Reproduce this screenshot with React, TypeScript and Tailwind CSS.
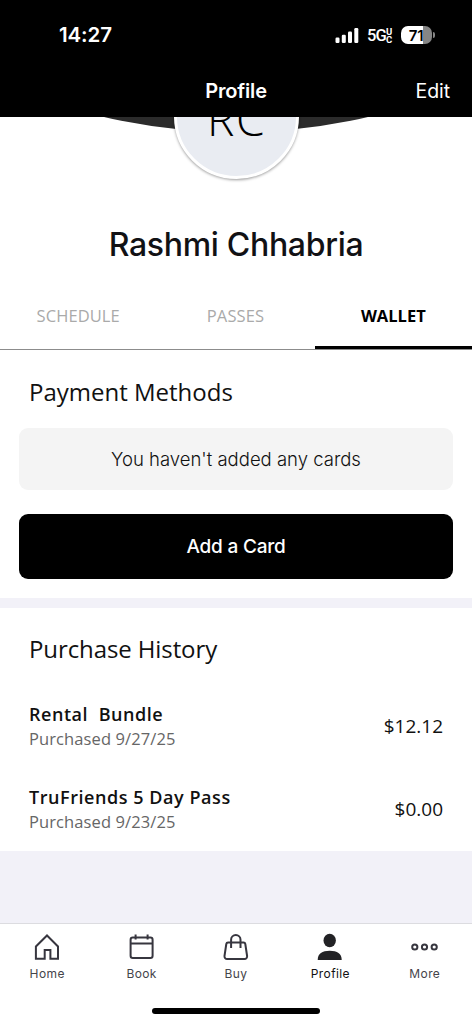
import type { ReactNode } from 'react'

const tabs = [
  { name: 'SCHEDULE', active: false },
  { name: 'PASSES', active: false },
  { name: 'WALLET', active: true },
]

const purchases = [
  { title: 'Rental  Bundle', date: 'Purchased 9/27/25', price: '$12.12' },
  { title: 'TruFriends 5 Day Pass', date: 'Purchased 9/23/25', price: '$0.00' },
]

function StatusBar() {
  return (
    <div className="flex h-[65px] items-start justify-between pr-[37px] pl-[59px] text-white">
      <span className="mt-[23px] text-[20.5px] leading-6 font-semibold tracking-[-0.1px]">14:27</span>
      <div className="mt-[25px] flex h-5 items-center">
        <svg width="25" height="17" viewBox="0 0 25 17" fill="currentColor">
          <rect x="0.5" y="10.5" width="4" height="5.5" rx="1.2" />
          <rect x="6.8" y="7.8" width="4" height="8.2" rx="1.2" />
          <rect x="13" y="4.5" width="4" height="11.5" rx="1.2" />
          <rect x="19.3" y="1" width="4" height="15" rx="1.2" />
        </svg>
        <span className="ml-[7px] w-[19px] pt-px font-['Roboto'] text-[16.5px] leading-5 font-medium tracking-[-0.8px]">5G</span>
        <span className="flex w-[7px] flex-col pt-px font-['Roboto'] text-[9.5px] leading-[8px] font-bold">
          <span>U</span>
          <span>C</span>
        </span>
        <div className="ml-[8px] flex h-[18px] w-[31px] items-center justify-center overflow-hidden rounded-[7px] bg-linear-to-r from-white from-70% to-[#858585] to-70%">
          <span className="mr-px text-[15px] leading-none font-semibold tracking-[-0.3px] text-black">71</span>
        </div>
        <div className="ml-px h-[6px] w-[2px] rounded-r-full bg-[#858585]" />
      </div>
    </div>
  )
}

function TitleBar() {
  return (
    <div className="grid h-[52px] grid-cols-3 items-center text-[20px] text-white">
      <span />
      <span className="text-center font-semibold tracking-[-0.15px]">Profile</span>
      <span className="pt-px pr-[22px] text-right text-[19.5px] tracking-[-0.1px]">Edit</span>
    </div>
  )
}

function Hero() {
  return (
    <div className="relative h-[168px] overflow-hidden">
      <svg className="absolute inset-x-0 top-0" width="472" height="16" viewBox="0 0 472 16">
        <circle cx="236" cy="-573" r="588" fill="#2b2b2b" />
      </svg>
      <div className="absolute top-[-63px] left-[174px] flex size-[125px] items-center justify-center rounded-full border-[3px] border-white bg-[#e9ecf2] shadow-[0_1px_3px_rgba(0,0,0,0.4)]">
        <span className="mt-[3px] font-['Open_Sans'] text-[46px] leading-[46px] font-light tracking-[1.5px] text-black">RC</span>
      </div>
      <h1 className="mt-[108px] text-center text-[32px] leading-10 font-[450] tracking-[-0.3px] text-[#111114]">
        Rashmi Chhabria
      </h1>
    </div>
  )
}

function Tabs() {
  return (
    <div className="grid h-[65px] grid-cols-3 border-b border-[#8c8c8c] font-['Open_Sans'] text-[16.5px]">
      {tabs.map((tab) => (
        <div
          key={tab.name}
          className={
            tab.active
              ? 'flex items-center justify-center border-b-[3px] border-black pt-px font-bold text-black'
              : 'flex items-center justify-center border-b-[3px] border-transparent pt-px pr-px text-[16.5px] tracking-[0.1px] text-[#aaa]'
          }
        >
          {tab.name}
        </div>
      ))}
    </div>
  )
}

function Icon({ children }: { children: ReactNode }) {
  return (
    <svg
      width="30"
      height="30"
      viewBox="0 0 30 30"
      fill="none"
      stroke="#37363f"
      strokeWidth="2"
      strokeLinejoin="round"
    >
      {children}
    </svg>
  )
}

function BottomNav() {
  const items = [
    {
      label: 'Home',
      icon: (
        <Icon>
          <path strokeLinejoin="miter" d="M3.9 14.5 15 3.5l11 11v12.2h-7.6v-8.8h-5.7v8.8H3.9Z" />
        </Icon>
      ),
    },
    {
      label: 'Book',
      icon: (
        <Icon>
          <rect x="3.6" y="5.5" width="22" height="20.5" rx="2.2" />
          <path d="M3.6 11.6h22M8.600 2.500v5M20.600 2.500v5" />
        </Icon>
      ),
    },
    {
      label: 'Buy',
      icon: (
        <Icon>
          <path d="M7.1 10.500h15.400a1.800 1.800 0 0 1 1.800 1.500l1.800 12a2.600 2.600 0 0 1-2.600 3H6.100a2.600 2.600 0 0 1-2.600-3l1.800-12A1.800 1.800 0 0 1 7.100 10.500Z" />
          <path d="M10.100 16V7.800a4.700 4.700 0 0 1 9.400 0V16" />
        </Icon>
      ),
    },
    {
      label: 'Profile',
      active: true,
      icon: (
        <svg width="30" height="30" viewBox="0 0 30 30" fill="#222225">
          <ellipse cx="14.700" cy="8.5" rx="6.2" ry="6.7" />
          <path d="M2.700 28c0-6.500 4.500-9.300 12-9.300S26.700 21.500 26.700 28Z" />
        </svg>
      ),
    },
    {
      label: 'More',
      icon: (
        <Icon>
          <circle cx="4.800" cy="15" r="2.600" />
          <circle cx="14.500" cy="15" r="2.600" />
          <circle cx="24.200" cy="15" r="2.600" />
        </Icon>
      ),
    },
  ]

  return (
    <nav className="flex h-[101px] flex-col items-center border-t border-[#dcdce0] bg-white">
      <div className="grid h-[84px] w-full grid-cols-5 pt-[8px]">
        {items.map((item) => (
          <div key={item.label} className="flex flex-col items-center">
            {item.icon}
            <span
              className={
                item.active
                  ? 'mt-[4px] text-[12px] leading-4 tracking-[0.4px] text-[#111]'
                  : 'mt-[4px] text-[12px] leading-4 tracking-[0.4px] text-[#44444a]'
              }
            >
              {item.label}
            </span>
          </div>
        ))}
      </div>
      <div className="h-[6px] w-[168px] rounded-full bg-black" />
    </nav>
  )
}

function App() {
  return (
    <div className="flex h-[1024px] w-[472px] flex-col overflow-hidden bg-[#f2f1f8] font-['Inter',sans-serif]">
      <header className="bg-black">
        <StatusBar />
        <TitleBar />
      </header>

      <div className="bg-white">
        <Hero />
        <Tabs />

        {/* Payment methods */}
        <section className="h-[248px] px-[19px] pt-[26px]">
          <h2 className="pl-[10px] font-['Open_Sans'] text-[24px] leading-8 text-[#111]">Payment Methods</h2>
          <div className="mt-[20px] flex h-[62px] items-center justify-center rounded-[9px] bg-[#f4f4f4] pt-px text-[18.5px] font-[350] text-[#111]">
            You haven't added any cards
          </div>
          <button className="mt-[24px] flex h-[65px] w-full items-center justify-center rounded-[9px] bg-black pt-[2px] text-[19px] font-medium tracking-[-0.2px] text-white">
            Add a Card
          </button>
        </section>
      </div>

      <div className="h-[10px]" />

      {/* Purchase history */}
      <section className="h-[243px] bg-white px-[29px] pt-[25px] font-['Open_Sans'] text-[#111]">
        <h2 className="text-[24px] leading-8 tracking-[-0.1px]">Purchase History</h2>
        <div className="mt-[36px] flex flex-col gap-[33px]">
          {purchases.map((p) => (
            <div key={p.title} className="flex h-[50px] items-center justify-between">
              <div>
                <div className="text-[18px] leading-[26px] font-semibold tracking-[0.55px] whitespace-pre">{p.title}</div>
                <div className="text-[16.5px] leading-6 tracking-[0.1px] text-[#666]">{p.date}</div>
              </div>
              <div className="text-[19px]">{p.price}</div>
            </div>
          ))}
        </div>
      </section>

      <div className="grow" />
      <BottomNav />
    </div>
  )
}

export default App
